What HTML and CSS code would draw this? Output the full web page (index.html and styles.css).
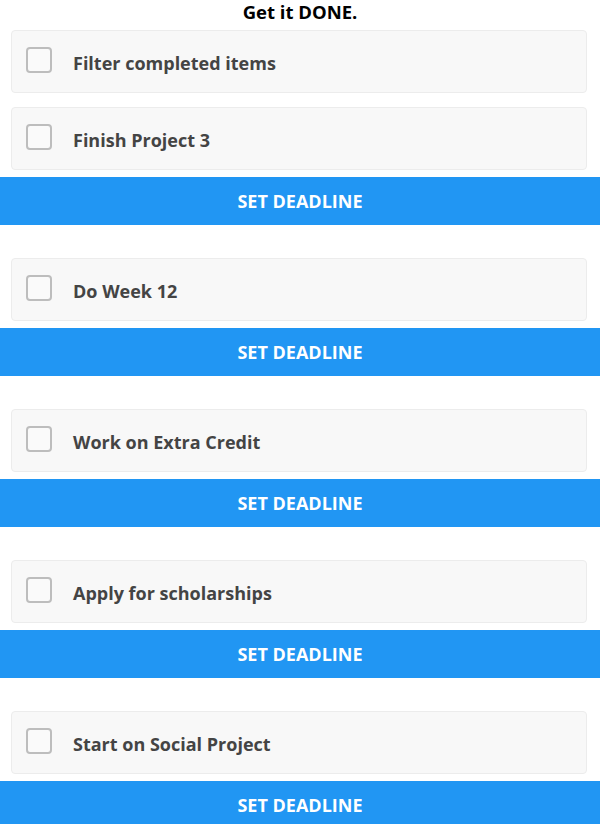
FILE: index.html
```html
<!DOCTYPE html>
<html>
<head>
<meta charset="utf-8">
<link rel="stylesheet" href="styles.css">
</head>
<body>
<h1 class="title">Get it DONE.</h1>
<label class="card filter">
  <span class="box"></span>
  <span class="label">Filter completed items</span>
</label>
<div class="list">
  <div class="item">
    <label class="card"><span class="box"></span><span class="label">Finish Project 3</span></label>
    <button class="btn">SET DEADLINE</button>
  </div>
  <div class="item">
    <label class="card"><span class="box"></span><span class="label">Do Week 12</span></label>
    <button class="btn">SET DEADLINE</button>
  </div>
  <div class="item">
    <label class="card"><span class="box"></span><span class="label">Work on Extra Credit</span></label>
    <button class="btn">SET DEADLINE</button>
  </div>
  <div class="item">
    <label class="card"><span class="box"></span><span class="label">Apply for scholarships</span></label>
    <button class="btn">SET DEADLINE</button>
  </div>
  <div class="item">
    <label class="card"><span class="box"></span><span class="label">Start on Social Project</span></label>
    <button class="btn">SET DEADLINE</button>
  </div>
</div>
</body>
</html>
```
FILE: styles.css
```css
html, body {
  margin: 0;
  padding: 0;
  background: #fff;
  font-family: "Open Sans", "Noto Sans", sans-serif;
}
.title {
  margin: 0;
  height: 22px;
  line-height: 24px;
  font-size: 18.5px;
  font-weight: 700;
  color: #000;
  text-align: center;
}
.card {
  box-sizing: border-box;
  display: flex;
  align-items: center;
  height: 63px;
  margin: 0 13px 0 11px;
  background: #f8f8f8;
  border: 1px solid #ececec;
  border-radius: 4px;
}
.filter {
  margin-top: 8px;
}
.box {
  box-sizing: border-box;
  width: 26px;
  height: 26px;
  margin-left: 14px;
  margin-right: 21px;
  margin-bottom: 4px;
  border: 2px solid #bdbdbd;
  border-radius: 4px;
  background: #fafafa;
  flex: none;
}
.label {
  font-size: 18px;
  font-weight: 700;
  color: #444;
  padding-top: 2px;
}
.list {
  display: flex;
  flex-direction: column;
  gap: 33px;
  margin-top: 14px;
}
.item {
  display: flex;
  flex-direction: column;
  gap: 7px;
}
.btn {
  display: block;
  width: 100%;
  height: 48px;
  margin: 0;
  padding: 0;
  border: none;
  background: #2196f3;
  color: #fff;
  font-family: "Open Sans", "Noto Sans", sans-serif;
  font-size: 18px;
  font-weight: 700;
  text-align: center;
}
```
